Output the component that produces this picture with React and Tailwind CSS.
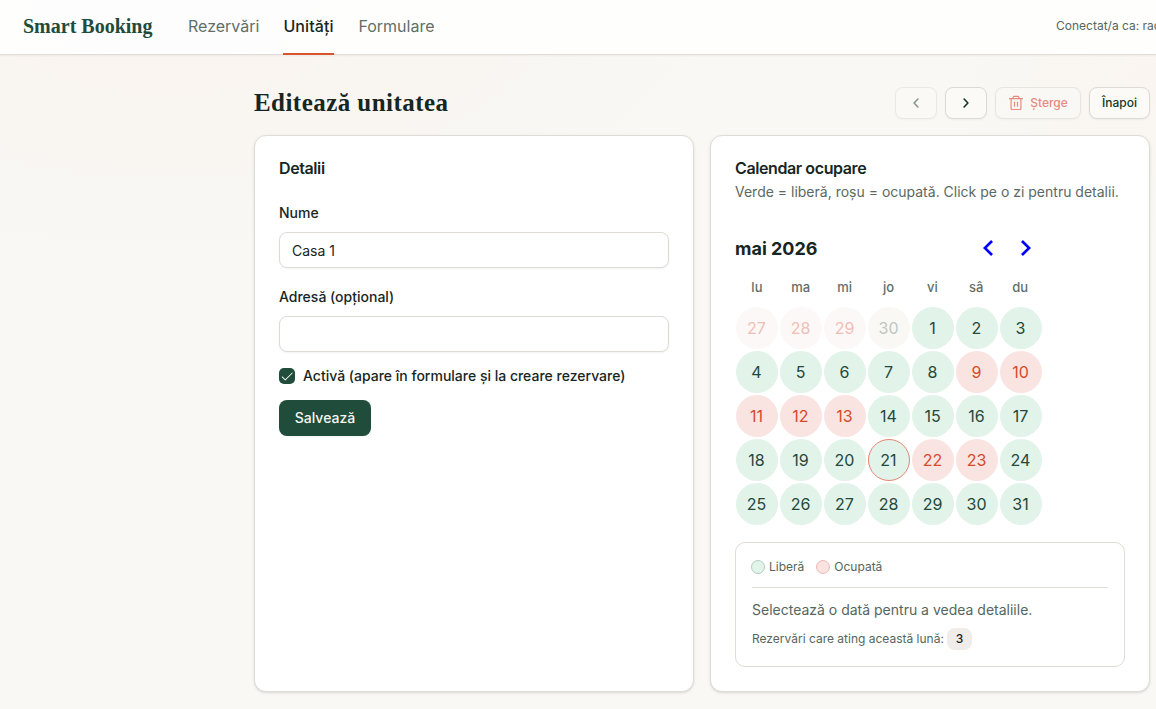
import { PiCheck } from "react-icons/pi";
import clsx from "clsx";

const weekdays = ["lu", "ma", "mi", "jo", "vi", "sâ", "du"];
const outside = [27, 28, 29, 30];
const monthDays = Array.from({ length: 31 }, (_, i) => i + 1);
const booked = [9, 10, 11, 12, 13, 22, 23];
const today = 21;

function Header() {
  return (
    <header className="flex h-[55px] items-center border-b border-[#e0ddd9] bg-white/85 pl-[23px] shadow-xs">
      <span className="w-[165px] pb-0.5 font-['Liberation_Serif',serif] text-[20px] font-bold text-[#204c3b]">
        Smart Booking
      </span>
      <nav className="flex h-[55px] gap-6 text-base">
        <a className="flex items-center pb-0.5 text-[#5f6f68]">Rezervări</a>
        <a className="flex w-[51px] items-center border-b-2 border-[#d9532f] font-medium tracking-[0.1px] text-[#17261f]">
          Unități
        </a>
        <a className="flex items-center pb-0.5 text-[#5f6f68]">Formulare</a>
      </nav>
      <span className="ml-auto w-[100px] shrink-0 overflow-hidden pb-0.5 text-xs whitespace-nowrap text-[#55665e]">
        Conectat/a ca: radu
      </span>
    </header>
  );
}

function Caret({ d }) {
  return (
    <svg
      className="size-4"
      viewBox="0 0 16 16"
      fill="none"
      stroke="currentColor"
      strokeWidth="1.6"
      strokeLinecap="round"
      strokeLinejoin="round"
    >
      <path d={d} />
    </svg>
  );
}

function Trash() {
  return (
    <svg
      className="size-4"
      viewBox="0 0 16 16"
      fill="none"
      stroke="currentColor"
      strokeWidth="1.2"
      strokeLinecap="round"
      strokeLinejoin="round"
    >
      <path d="M1.6 3.7h12.8M5.1 3.5V2.3a1 1 0 0 1 1-1h3.8a1 1 0 0 1 1 1v1.2M3.1 3.9v9.6a1 1 0 0 0 1 1h7.8a1 1 0 0 0 1-1V3.9M6.5 7v4.2M9.5 7v4.2" />
    </svg>
  );
}

function ToolButton({ className, children }) {
  return (
    <button
      className={clsx(
        "flex h-8 items-center justify-center rounded-lg border border-[#dcdad5] bg-[#fbfaf7] text-xs font-medium text-[#17362a] shadow-xs",
        className
      )}
    >
      {children}
    </button>
  );
}

function Field({ label, value }) {
  return (
    <label className="flex flex-col">
      <span className="text-sm leading-5 font-medium">{label}</span>
      <input
        className="mt-[9px] h-9 rounded-lg border border-[#dedbd3] bg-white px-3 text-sm shadow-xs"
        defaultValue={value}
      />
    </label>
  );
}

function Details() {
  return (
    <section className="h-[557px] w-[440px] rounded-xl border border-[#dfdcd6] bg-white p-6 shadow-sm">
      <h2 className="text-base leading-4 font-semibold tracking-tight">Detalii</h2>
      <div className="mt-[27px] flex flex-col gap-[19px]">
        <Field label="Nume" value="Casa 1" />
        <Field label="Adresă (opțional)" value="" />
      </div>
      <div className="mt-[14px] flex items-center gap-2">
        <span className="flex size-4 items-center justify-center rounded-[5px] bg-[#204c3b] text-white">
          <PiCheck className="size-3.5" />
        </span>
        <span className="text-sm leading-5 font-medium">
          Activă (apare în formulare și la creare rezervare)
        </span>
      </div>
      <button className="mt-[14px] h-9 w-[92px] rounded-lg bg-[#204c3b] text-sm font-medium text-[#f7f6f2] shadow-xs">
        Salvează
      </button>
    </section>
  );
}

function Day({ day, faded }) {
  const isBooked = faded ? day !== 30 : booked.includes(day);
  return (
    <div className="flex size-11 items-center justify-center">
      <button
        className={clsx(
          "size-[42px] rounded-full border pr-px text-base",
          !faded && isBooked && "bg-[#f9e4e2] text-[#d64a2b]",
          !faded && !isBooked && "bg-[#e2f3ea] text-[#24483a]",
          faded && isBooked && "bg-[#fcf8f7] text-[#f1beb5]",
          faded && !isBooked && "bg-[#f9f8f5] text-[#bfc6c1]",
          !faded && day === today ? "border-[#e48772]" : "border-transparent"
        )}
      >
        {day}
      </button>
    </div>
  );
}

function Calendar() {
  return (
    <div className="w-[308px]">
      <div className="flex h-11 items-center justify-between">
        <span className="pt-0.5 text-lg font-bold">mai 2026</span>
        <div className="flex gap-3 pr-1.5 text-[#0000ff]">
          <svg className="size-6" viewBox="0 0 24 24" fill="currentColor">
            <polygon points="16 18.112 9.811 12 16 5.877 14.089 4 6 12 14.089 20" />
          </svg>
          <svg className="size-6" viewBox="0 0 24 24" fill="currentColor">
            <polygon points="8 18.112 14.189 12 8 5.877 9.911 4 18 12 9.911 20" />
          </svg>
        </div>
      </div>
      <div className="grid h-9 grid-cols-7 pr-px text-center text-[13px] leading-[34px] font-medium text-[#5f6f68]">
        {weekdays.map((name) => (
          <span key={name}>{name}</span>
        ))}
      </div>
      <div className="grid grid-cols-7">
        {outside.map((day) => (
          <Day key={day} day={day} faded />
        ))}
        {monthDays.map((day) => (
          <Day key={day} day={day} />
        ))}
      </div>
    </div>
  );
}

function Legend() {
  return (
    <div className="mt-4 h-[125px] rounded-[10px] border border-[#dfdcd4] px-4 pt-4 text-xs text-[#55665e]">
      <div className="flex h-[29px] items-start gap-3 border-b border-[#dfddd8]">
        <span className="-ml-px flex items-center gap-1">
          <i className="size-3.5 rounded-full border border-[#b5cdc1] bg-[#e2f3ea]" />
          Liberă
        </span>
        <span className="flex items-center gap-1">
          <i className="size-3.5 rounded-full border border-[#efb9ae] bg-[#f9e4e2]" />
          Ocupată
        </span>
      </div>
      <p className="mt-3 text-sm leading-5">Selectează o dată pentru a vedea detaliile.</p>
      <p className="mt-2 flex items-center gap-[3px]">
        Rezervări care ating această lună:
        <span className="flex h-[22px] w-[25px] items-center justify-center rounded-lg bg-[#f0ece9] font-medium text-[#17261f]">
          3
        </span>
      </p>
    </div>
  );
}

function Occupancy() {
  return (
    <section className="h-[557px] w-[440px] rounded-xl border border-[#dfdcd6] bg-white p-6 shadow-sm">
      <h2 className="text-base leading-4 font-semibold tracking-tight">Calendar ocupare</h2>
      <p className="mt-1.5 mb-6 text-sm leading-5 whitespace-nowrap text-[#5a6a63]">
        Verde = liberă, roșu = ocupată. Click pe o zi pentru detalii.
      </p>
      <Calendar />
      <Legend />
    </section>
  );
}

export default function App() {
  return (
    <div className="h-[709px] overflow-hidden bg-[#f9f8f4] bg-[radial-gradient(ellipse_550px_260px_at_15%_0%,#f9f3ef,transparent),radial-gradient(ellipse_200px_150px_at_100%_12%,#faf5f0,transparent)] font-['Inter',sans-serif] text-[#17261f]">
      <Header />
      <main className="ml-[254px] w-[896px] pt-8">
        <div className="flex h-8 items-center justify-between">
          <h1 className="font-['Liberation_Serif',serif] text-[25px] font-bold tracking-[0.45px]">
            Editează unitatea
          </h1>
          <div className="flex gap-2">
            <ToolButton className="w-[42px] opacity-50">
              <Caret d="M9.9 4 6.1 8l3.8 4" />
            </ToolButton>
            <ToolButton className="w-[42px]">
              <Caret d="m6.1 4 3.8 4-3.8 4" />
            </ToolButton>
            <ToolButton className="w-[86px] gap-1.5 text-[#d9432f] opacity-60">
              <Trash />
              Șterge
            </ToolButton>
            <ToolButton className="w-[61px]">Înapoi</ToolButton>
          </div>
        </div>
        <div className="mt-4 flex gap-4">
          <Details />
          <Occupancy />
        </div>
      </main>
    </div>
  );
}
